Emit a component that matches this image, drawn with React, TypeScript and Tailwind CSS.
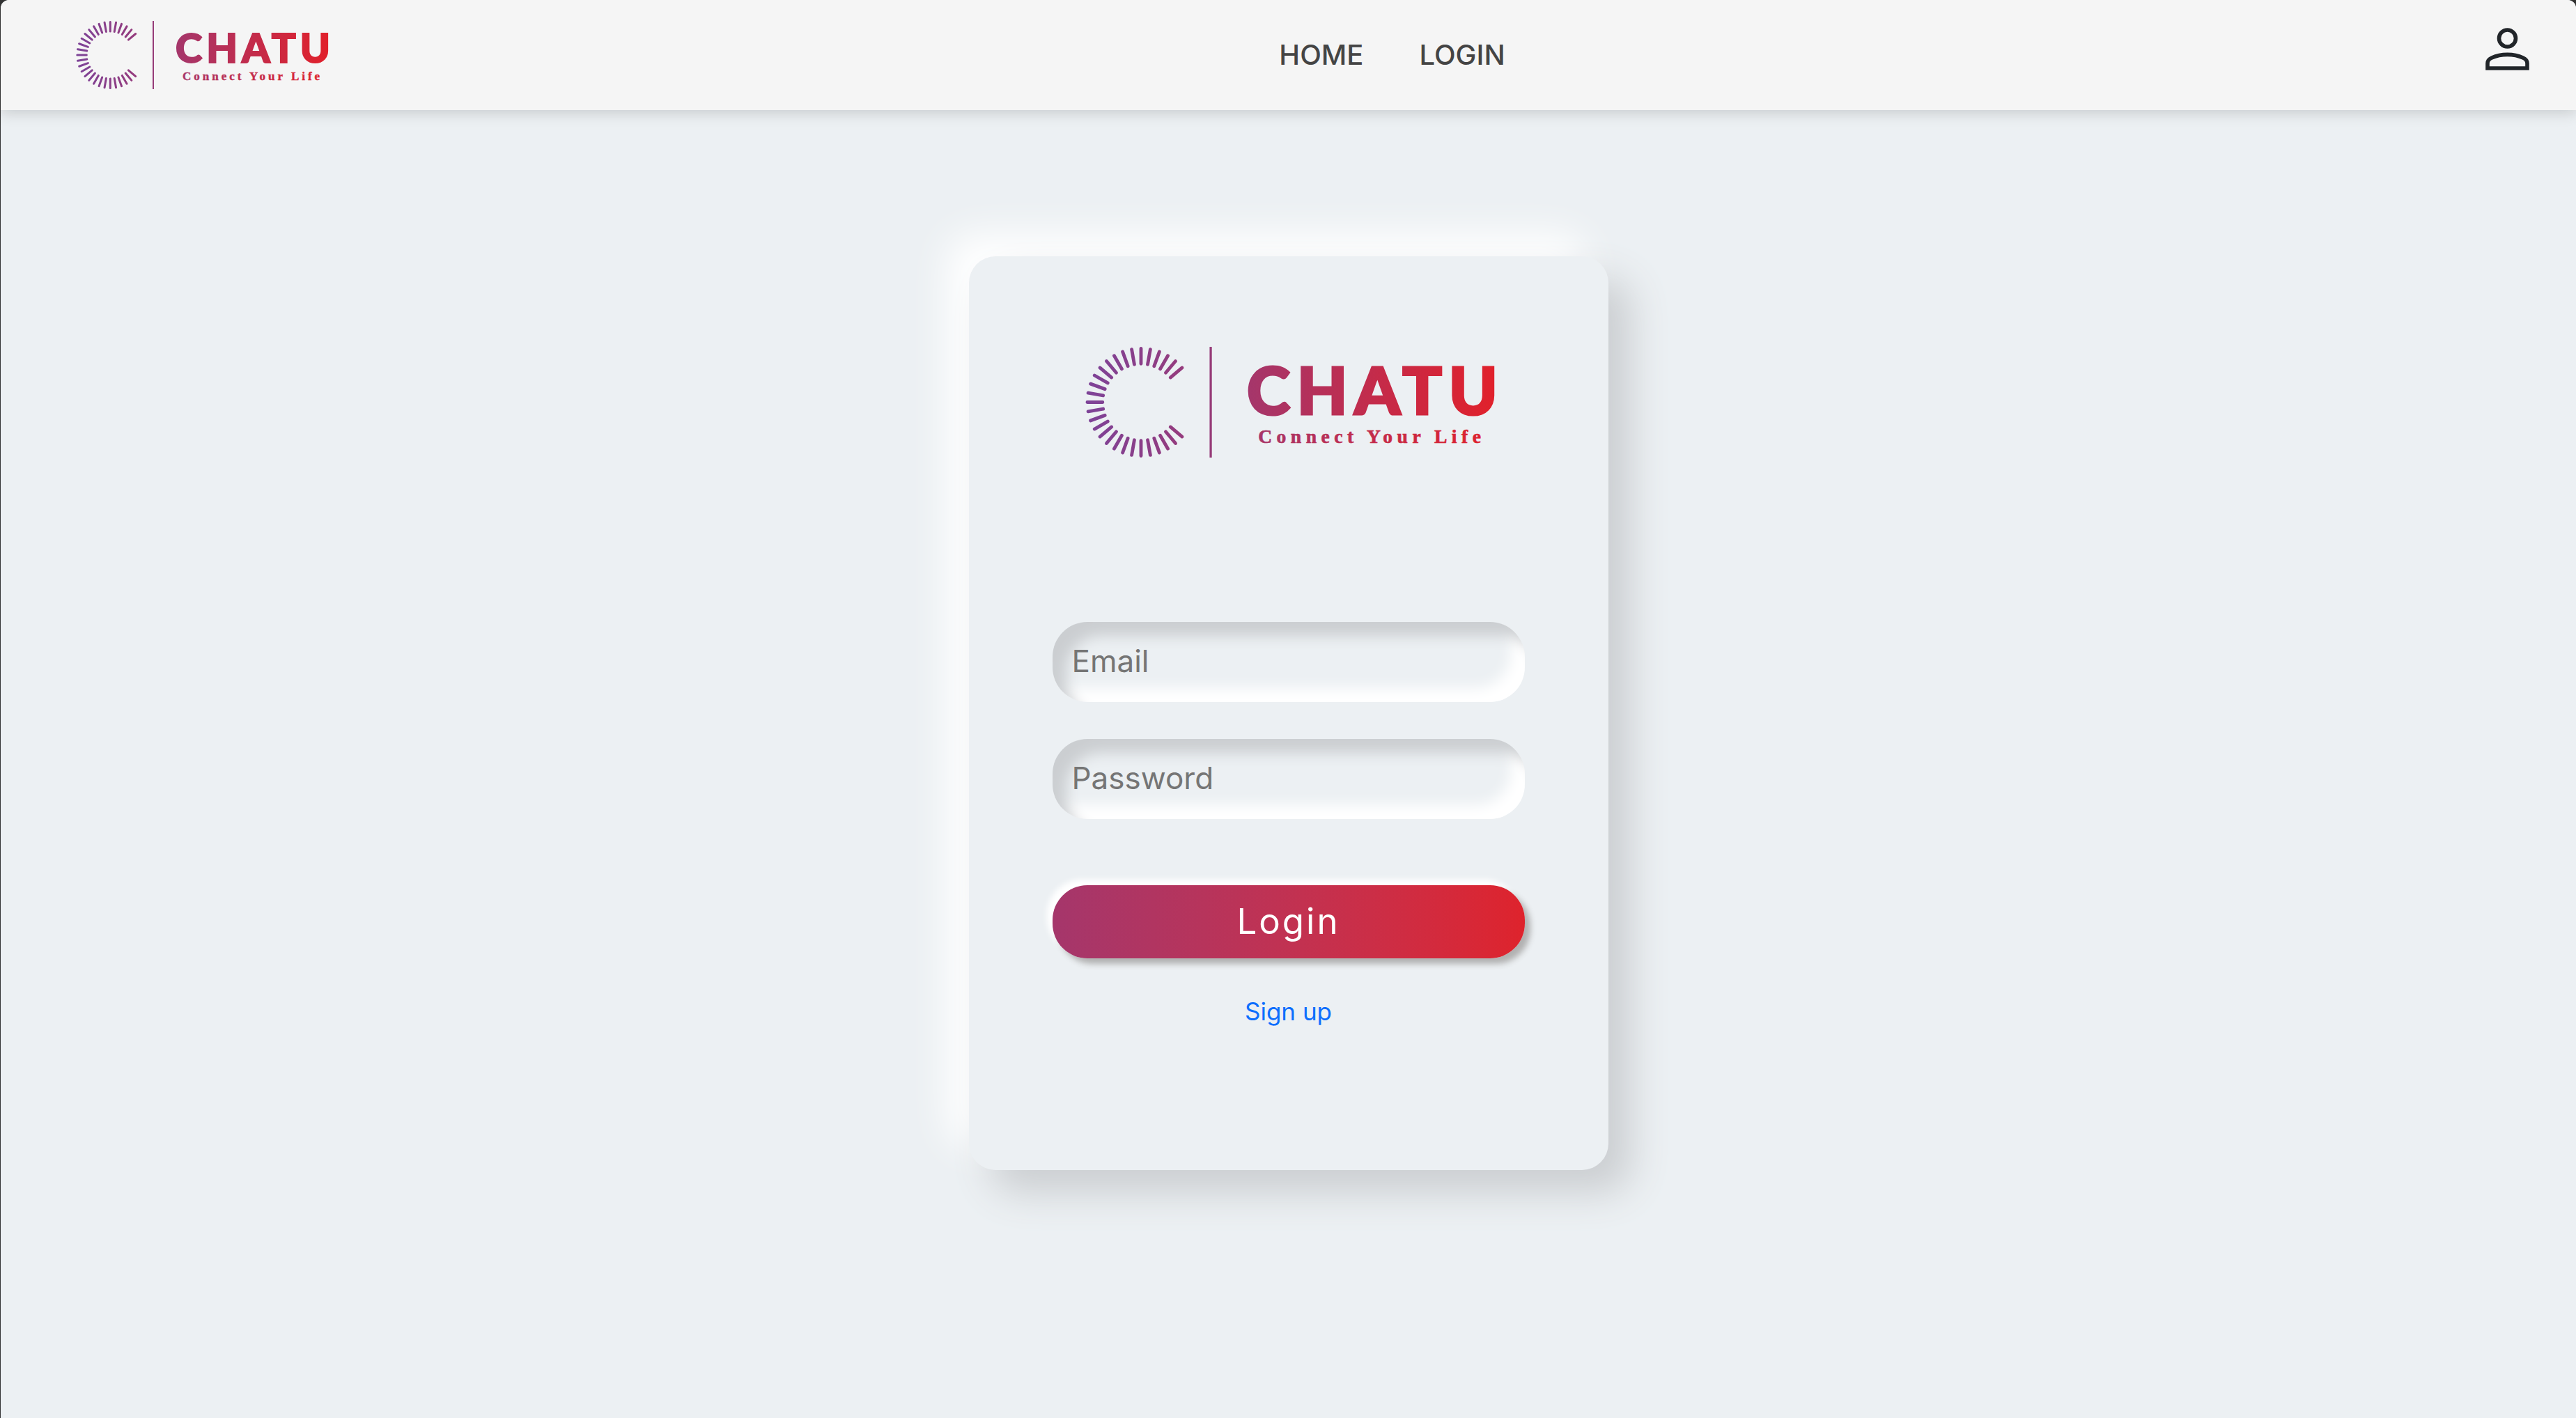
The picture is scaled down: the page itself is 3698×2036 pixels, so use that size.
import { useId } from "react";

const SPOKES = Array.from({ length: 36 }, (_, i) => i * 10).filter(
  (angle) => angle <= 50 || angle >= 130,
);

function Logo({ className }: { className: string }) {
  const gradient = useId();
  return (
    <svg viewBox="0 0 360 100" className={className} role="img" aria-label="Chatu, Connect Your Life">
      <defs>
        <linearGradient id={gradient} gradientUnits="userSpaceOnUse" x1="0" y1="0" x2="360" y2="0">
          <stop offset="0" stopColor="#7d4398" />
          <stop offset="0.4" stopColor="#a5366b" />
          <stop offset="1" stopColor="#e0212c" />
        </linearGradient>
      </defs>
      <g stroke={`url(#${gradient})`} strokeWidth="3" strokeLinecap="round">
        {SPOKES.map((angle) => {
          const a = (angle * Math.PI) / 180;
          const x = Math.sin(a);
          const y = -Math.cos(a);
          // The hair of extra length keeps the bounding box of upright spokes non-empty.
          return (
            <line
              key={angle}
              x1={49.3 + 34 * x}
              y1={50 + 34 * y}
              x2={49.3 + 47.5 * x + 0.01}
              y2={50 + 47.5 * y + 0.01}
            />
          );
        })}
      </g>
      <rect x="110" y="1" width="2" height="98" fill="#963b78" />
      <text
        x="143"
        y="61"
        fill={`url(#${gradient})`}
        stroke={`url(#${gradient})`}
        strokeWidth="2"
        className="font-['Lato'] text-[58px] font-black tracking-[6px]"
      >
        CHATU
      </text>
      <text
        x="153"
        y="86"
        fill={`url(#${gradient})`}
        stroke={`url(#${gradient})`}
        strokeWidth="0.4"
        className="font-['Liberation_Serif'] text-[17px] font-bold tracking-[4px]"
      >
        Connect Your Life
      </text>
    </svg>
  );
}

function PersonIcon() {
  return (
    <svg viewBox="0 0 64 62" className="h-[62px] w-16" fill="none" stroke="#212529" strokeWidth="5.6" aria-hidden="true">
      <circle cx="31.5" cy="15" r="12" />
      <path d="M3 58V51C3 47.5 5 44.8 9 43C16 39.8 23 38.4 31.5 38.4S47 39.8 54 43C58 44.8 60 47.5 60 51V58Z" />
    </svg>
  );
}

function Field({ label, type }: { label: string; type: string }) {
  return (
    <input
      type={type}
      aria-label={label}
      placeholder={label}
      className="h-[115px] w-full rounded-[50px] bg-[#ecf0f3] px-7 pb-1 text-[44px] text-[#333] shadow-[inset_20px_20px_20px_#cbced1,inset_-20px_-20px_20px_#ffffff] outline-none placeholder:text-[#757575]"
    />
  );
}

export default function App() {
  return (
    <div className="min-h-screen bg-[#333] pl-px font-['Inter',sans-serif]">
      <div className="min-h-screen rounded-t-xl bg-[#ecf0f3]">
        <header className="flex h-[158px] items-center rounded-t-xl bg-[#f5f5f5] pr-[26px] pl-[108px] shadow-[0_5px_20px_rgba(0,0,0,0.15)]">
          <a href="#home" className="shrink-0">
            <Logo className="h-[100px] w-[360px] overflow-visible" />
          </a>
          <nav className="flex flex-1 justify-center gap-20 text-[40px] font-medium text-[#444]">
            <a href="#home">HOME</a>
            <a href="#login">LOGIN</a>
          </nav>
          <button type="button" aria-label="Account" className="px-10 pb-4">
            <PersonIcon />
          </button>
        </header>
        <main className="flex justify-center pt-[210px] pb-20">
          <form className="flex w-full max-w-[918px] flex-col items-center rounded-[38px] bg-[#ecf0f3] px-[120px] pt-32 pb-[203px] shadow-[32px_32px_55px_#cbced1,-32px_-32px_55px_#ffffff]">
            <Logo className="mb-[234px] h-[163px] w-[584px] overflow-visible" />
            <div className="flex w-full flex-col gap-[53px]">
              <Field label="Email" type="email" />
              <Field label="Password" type="password" />
            </div>
            <button
              type="button"
              className="mt-[95px] h-[105px] w-full rounded-[50px] bg-linear-to-r from-[#a5366b] to-[#de232c] text-[51px] tracking-[3px] text-white shadow-[8px_8px_8px_#b1b1b1,-8px_-8px_8px_#ffffff]"
            >
              Login
            </button>
            <a href="#signup" className="mt-[51px] text-[35px] leading-[50px] text-[#0d6efd]">
              Sign up
            </a>
          </form>
        </main>
      </div>
    </div>
  );
}
